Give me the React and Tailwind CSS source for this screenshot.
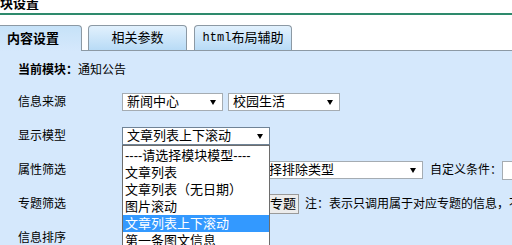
import React from 'react';

const font = "font-['Liberation_Sans','Noto_Sans_CJK_SC',sans-serif]";

function Arrow() {
  return <span className="mr-[6px] h-0 w-0 shrink-0 border-x-[3px] border-t-[5px] border-x-transparent border-t-black" />;
}

function FakeSelect({ text, className = '', focused = false }) {
  return (
    <div
      className={`flex h-[18px] shrink-0 items-center justify-between overflow-hidden border bg-white pl-[4px] text-[13px] leading-[16px] whitespace-nowrap ${
        focused ? 'border-[#6f8396]' : 'border-[#a5acb2]'
      } ${className}`}
    >
      <span>{text}</span>
      <Arrow />
    </div>
  );
}

const options = [
  '----请选择模块模型----',
  '文章列表',
  '文章列表（无日期）',
  '图片滚动',
  '文章列表上下滚动',
  '第一条图文信息',
  '图文列表',
];

function App() {
  return (
    <div className={`h-[245px] w-[512px] overflow-hidden bg-white text-black ${font}`}>
      {/* page title, partly scrolled out */}
      <div className="-mt-[3px] -ml-[13px] h-[14px] text-[13px] leading-[14px] font-bold whitespace-nowrap">模块设置</div>
      <div className="mt-[2px] h-[2px] bg-[#2e8a6c]" />

      {/* tabs */}
      <div className="mt-[10px] -ml-[16px] flex h-[26px] border-b border-[#8c99a4]">
        <div className="relative z-10 flex h-[26px] w-[98px] shrink-0 items-center justify-center rounded-t-[4px] border-x border-t border-[#8c99a4] bg-gradient-to-b from-[#c6e2f8] to-[#d5e8fc] text-[13px] font-bold">
          内容设置
        </div>
        <div className="ml-[6px] flex h-[25px] w-[99px] shrink-0 items-center justify-center rounded-t-[4px] border-x border-t border-[#8c99a4] bg-gradient-to-b from-[#e2f1fd] to-[#b8dbf6] text-[13px]">
          相关参数
        </div>
        <div className="ml-[7px] flex h-[25px] w-[98px] shrink-0 items-center justify-center rounded-t-[4px] border-x border-t border-[#8c99a4] bg-gradient-to-b from-[#e2f1fd] to-[#b8dbf6] text-[13px]">
          <span className="font-['Liberation_Mono',monospace] text-[12px]">html</span>布局辅助
        </div>
      </div>

      {/* content */}
      <div className="h-[200px] bg-[#d5e8fc] pt-[9px] pl-[18px] text-[12px]">
        <div className="flex h-[20px] items-center">
          <span className="font-bold">当前模块：</span>
          <span>通知公告</span>
        </div>

        <div className="mt-[5px] flex h-[34px] items-center">
          <div className="w-[104px] shrink-0">信息来源</div>
          <FakeSelect text="新闻中心" className="w-[101px]" />
          <FakeSelect text="校园生活" className="ml-[5px] w-[112px]" />
        </div>

        <div className="flex h-[34px] items-center">
          <div className="w-[104px] shrink-0">显示模型</div>
          <div className="relative z-20">
            <FakeSelect text="文章列表上下滚动" className="w-[148px]" focused />
            <div className="absolute top-full left-0 w-[148px] border border-[#6d6d6d] bg-white pt-[1px] text-[13px]">
              {options.map((o) => (
                <div
                  key={o}
                  className={`h-[17px] pl-[2px] leading-[17px] whitespace-nowrap ${
                    o === '文章列表上下滚动' ? 'bg-[#3399ff] text-white' : ''
                  }`}
                >
                  {o}
                </div>
              ))}
            </div>
          </div>
        </div>

        <div className="flex h-[34px] items-center whitespace-nowrap">
          <div className="w-[104px] shrink-0">属性筛选</div>
          <FakeSelect text="请选择包含类型" className="w-[112px]" />
          <FakeSelect text="请选择排除类型" className="ml-[4px] w-[185px]" />
          <span className="ml-[7px] shrink-0">自定义条件：</span>
          <div className="h-[19px] w-[120px] shrink-0 border border-[#a5acb2] bg-white" />
        </div>

        <div className="flex h-[34px] items-center whitespace-nowrap">
          <div className="w-[104px] shrink-0">专题筛选</div>
          <div className="h-[19px] w-[115px] shrink-0 border border-[#a5acb2] bg-white" />
          <div className="ml-[4px] flex h-[20px] w-[58px] shrink-0 items-center justify-center border border-[#9a9a9a] bg-[#ececec] text-[13px]">
            选择专题
          </div>
          <span className="ml-[6px] shrink-0">注：表示只调用属于对应专题的信息，不选则调用全部信息</span>
        </div>

        <div className="flex h-[34px] items-center">
          <div className="w-[104px] shrink-0">信息排序</div>
        </div>
      </div>
    </div>
  );
}

export default App;
